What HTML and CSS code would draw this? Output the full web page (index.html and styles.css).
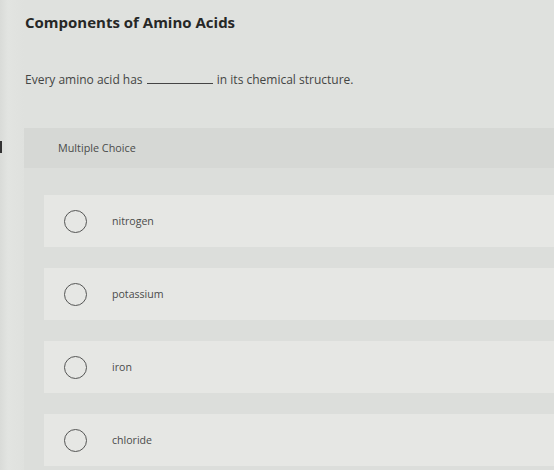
FILE: index.html
```html
<!DOCTYPE html>
<html lang="en">
<head>
<meta charset="utf-8">
<title>Components of Amino Acids</title>
<link rel="stylesheet" href="styles.css">
</head>
<body>
<div class="page">
  <div class="edge-mark"></div>
  <header class="intro">
    <h1 class="title">Components of Amino Acids</h1>
    <p class="prompt">Every amino acid has <span class="blank"></span> in its chemical structure.</p>
  </header>
  <section class="panel">
    <div class="panel-head">Multiple Choice</div>
    <div class="options">
      <label class="option"><span class="radio"></span><span class="opt-text">nitrogen</span></label>
      <label class="option"><span class="radio"></span><span class="opt-text">potassium</span></label>
      <label class="option"><span class="radio"></span><span class="opt-text">iron</span></label>
      <label class="option"><span class="radio"></span><span class="opt-text">chloride</span></label>
    </div>
  </section>
</div>
</body>
</html>
```
FILE: styles.css
```css
html, body {
  margin: 0;
  padding: 0;
}
body {
  background: #dfe1de;
  font-family: "Open Sans", Lato, "Liberation Sans", sans-serif;
  color: #3a3b3a;
  width: 554px;
  height: 470px;
  overflow: hidden;
}
.page {
  position: relative;
  box-sizing: border-box;
  padding-top: 12px;
  height: 470px;
  background: linear-gradient(90deg, #d9dbd8 0, #e2e4e1 8px, #dfe1de 24px);
}
.edge-mark {
  position: absolute;
  left: 0;
  top: 141px;
  width: 2px;
  height: 12px;
  background: #333;
}
.intro {
  padding-left: 25px;
}
.title {
  margin: 0;
  font-size: 15px;
  line-height: 20px;
  font-weight: 700;
  color: #262726;
}
.prompt {
  margin: 40px 0 0;
  font-size: 12px;
  line-height: 16px;
  color: #444544;
}
.blank {
  display: inline-block;
  width: 66px;
  border-bottom: 1px solid #444;
  vertical-align: baseline;
  margin: 0 1px;
}
.panel {
  margin: 40px 0 0 24px;
  background: #dcdedb;
  height: 342px;
}
.panel-head {
  height: 40px;
  box-sizing: border-box;
  padding: 13px 0 0 34px;
  font-size: 10.8px;
  line-height: 14px;
  color: #4a4b4a;
  background: #d6d8d5;
}
.options {
  display: flex;
  flex-direction: column;
  gap: 21px;
  padding: 27px 0 0 20px;
}
.option {
  display: flex;
  align-items: center;
  height: 52px;
  background: #e6e7e4;
}
.radio {
  width: 21px;
  height: 21px;
  border: 1.5px solid #555655;
  border-radius: 50%;
  margin-left: 20px;
  flex: none;
}
.opt-text {
  margin-left: 25px;
  font-size: 10.6px;
  color: #4a4b4a;
}
```
